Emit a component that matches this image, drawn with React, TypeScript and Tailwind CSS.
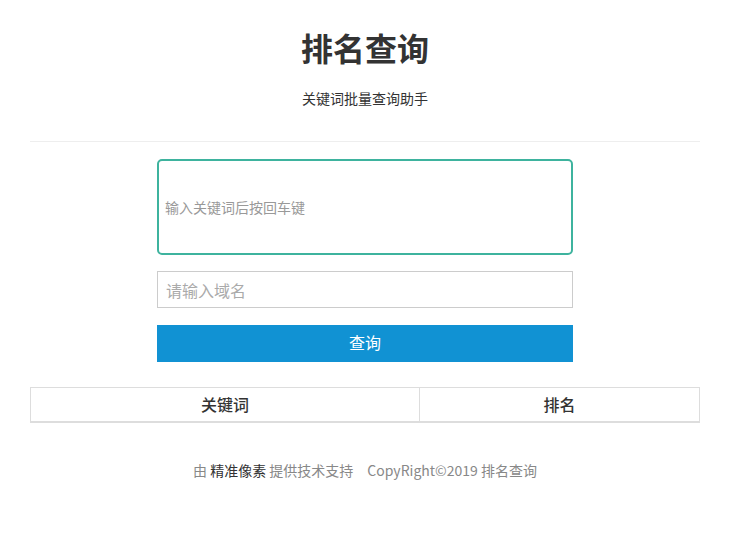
import React from 'react';

const font = { fontFamily: '"Noto Sans CJK SC", "Noto Sans", sans-serif' };

export default function App() {
  return (
    <div className="min-h-[537px] bg-white text-[#333]" style={font}>
      <div className="ml-[30px] w-[670px]">
        <div className="pt-[27px] text-center">
          <h1 className="text-[32px] leading-[40px] font-bold text-[#333]">排名查询</h1>
          <p className="mt-[22px] text-[14px] leading-[18px] text-[#333]">关键词批量查询助手</p>
        </div>
        <div className="mt-[34px] border-t border-[#eee]" />

        <form className="mx-auto mt-[17px] w-[416px]" onSubmit={(e) => e.preventDefault()}>
          <textarea
            className="block h-[96px] w-full resize-none rounded-[5px] border-2 border-[#3eb39e] px-[6px] pt-[37px] text-[14px] leading-[18px] text-[#555] outline-none placeholder:text-[#999]"
            placeholder="输入关键词后按回车键"
          />
          <input
            type="text"
            className="mt-[16px] block h-[37px] w-full border border-[#ccc] px-[8px] text-[16px] text-[#555] outline-none placeholder:text-[#aaa]"
            placeholder="请输入域名"
          />
          <button
            type="submit"
            className="mt-[17px] block h-[37px] w-full bg-[#1192d3] pb-[3px] text-[16px] text-white"
          >
            查询
          </button>
        </form>

        <table className="mt-[25px] w-full border-collapse">
          <thead>
            <tr className="border-b-2 border-[#ddd]">
              <th className="h-[34px] w-[389px] border border-[#ddd] text-[16px] font-medium text-[#333]">关键词</th>
              <th className="h-[34px] border border-[#ddd] text-[16px] font-medium text-[#333]">排名</th>
            </tr>
          </thead>
        </table>

        <div className="mt-[38px] text-center text-[14px] leading-[18px] text-[#888]">
          由 <span className="text-[#333]">精准像素</span> 提供技术支持
          <span className="ml-[14px]">CopyRight©2019 排名查询</span>
        </div>
      </div>
    </div>
  );
}
